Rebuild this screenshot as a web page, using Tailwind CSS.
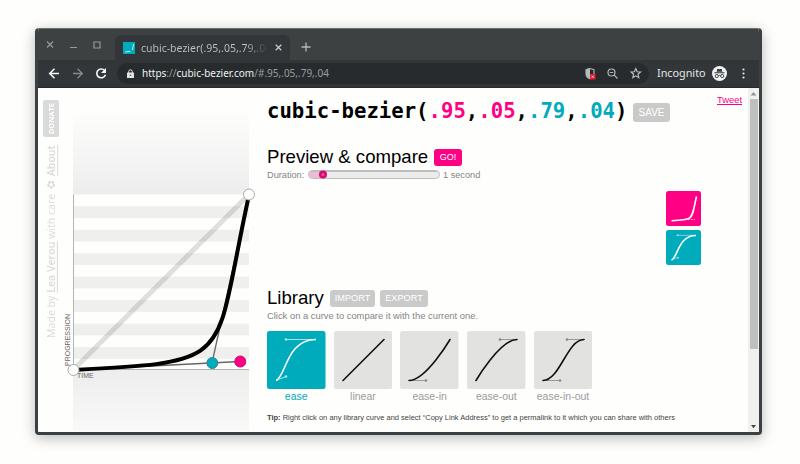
<!DOCTYPE html>
<html lang="en">
<head>
<meta charset="utf-8">
<title>cubic-bezier(.95,.05,.79,.04)</title>
<script src="https://cdn.jsdelivr.net/npm/@tailwindcss/browser@4"></script>
</head>
<body class="h-[464px] w-[800px] overflow-hidden bg-[#fefefd] pt-[28px] pl-[35px] font-['Liberation_Sans',Arial,sans-serif]">
<div class="flex h-[407px] w-[727px] flex-col overflow-hidden rounded-[4px] border-x-[3px] border-t-[1px] border-b-[3px] border-[#3b4042] border-t-[#6b7070] bg-[#fefefd] shadow-[0_3px_14px_rgba(0,0,0,0.28)]">

  <!-- Tab strip -->
  <header class="flex h-[31px] shrink-0 items-end bg-[#3d4141] font-['Noto_Sans','Open_Sans',sans-serif]">
    <svg class="h-[31px] w-[77px] shrink-0" viewBox="0 0 77 31" fill="none" stroke="#969a9a" stroke-width="1.2">
      <path d="M9 12.500l6 6M15 12.500l-6 6M32 18.500h7"/><path d="M56 13h6v6h-6z"/>
    </svg>
    <div class="flex h-[25px] w-[175px] shrink-0 items-center rounded-t-[6px] bg-[#323638] pl-[8px]">
      <svg class="size-[12px] shrink-0" viewBox="0 0 12 12"><path fill="#00abbc" d="M0 0h12v12H0z"/><path d="M2 10L7.500 9.300M9.500 8L10.500 2" fill="none" stroke="#bfeaee" stroke-width="1"/></svg>
      <span class="ml-[6px] w-[127px] shrink-0 overflow-hidden whitespace-nowrap bg-linear-to-r from-[#c0c3c3] from-82% to-[#323638] bg-clip-text text-[10.5px] leading-[16px] text-transparent">cubic-bezier(.95,.05,.79,.04)</span>
      <svg class="ml-[7px] size-[7px] shrink-0" viewBox="0 0 7 7" stroke="#c4c7c7" stroke-width="1.300"><path d="M.7.7l5.600 5.600M6.300.7L.7 6.300"/></svg>
    </div>
    <svg class="mb-[8px] ml-[11px] size-[10px]" viewBox="0 0 10 10" stroke="#b5b8b8" stroke-width="1.300"><path d="M5 .5v9M.5 5h9"/></svg>
  </header>

  <!-- Toolbar -->
  <div class="flex h-[28px] shrink-0 items-center border-b border-[#262a2b] bg-[#323638] font-['Noto_Sans','Open_Sans',sans-serif]">
    <svg class="h-[27px] w-[79px] shrink-0" viewBox="0 0 79 27" fill="none" stroke-width="1.600">
      <path d="M21 13.500h-9M16.500 8.700l-4.800 4.800 4.800 4.800" stroke="#f4f5f5"/>
      <path d="M35 13.500h9M39.500 8.700l4.800 4.800-4.800 4.800" stroke="#868a8a" stroke-width="1.300"/>
      <path d="M66.600 10.600A4.400 4.400 0 1 0 67.400 14.700" stroke="#f4f5f5"/><path d="M68 8v5h-5z" fill="#f4f5f5"/>
    </svg>
    <div class="flex h-[21px] w-[532px] shrink-0 items-center rounded-full bg-[#272b2d] pl-[10px] text-[10px]">
      <svg class="h-[9px] w-[7px] shrink-0" viewBox="0 0 7 9"><rect y="3.500" width="7" height="5.500" rx=".6" fill="#e2e4e4"/><path d="M1.700 4V2.600a1.800 1.800 0 0 1 3.600 0V4" fill="none" stroke="#e2e4e4"/><circle cx="3.500" cy="6.200" r=".8" fill="#555"/></svg>
      <span class="ml-[8px] whitespace-nowrap text-[#999d9f]"><span class="text-[#f0f2f2]">https</span>://<span class="text-[#f0f2f2]">cubic-bezier.com</span>/#.95,.05,.79,.04</span>
      <svg class="mr-[5px] ml-auto h-[21px] w-[59px] shrink-0" viewBox="0 0 59 21" fill="none">
        <path d="M5 5.500l4 1.300v4c0 2.300-1.700 4.200-4 5-2.300-.8-4-2.700-4-5v-4z" stroke="#aaaeae" stroke-width="1.200"/><path d="M5 5.500v10.300c-2.300-.8-4-2.700-4-5v-4z" fill="#b8bbbb"/>
        <rect x="5" y="11" width="5.500" height="5.500" fill="#e3202c"/><path d="M6.700 12.700l2 2M8.700 12.700l-2 2" stroke="#fff" stroke-width=".8"/>
        <circle cx="26.500" cy="9.500" r="3.500" stroke="#b3b6b6" stroke-width="1.200"/><path d="M24.800 9.500h3.400M29.200 12.200l3.300 3.300" stroke="#b3b6b6" stroke-width="1.200"/>
        <path d="M50.800 5.500l1.400 3.200 3.400.3-2.600 2.300.8 3.400-3-1.800-3 1.800.8-3.400L46 9l3.400-.3z" stroke="#c3c6c6" stroke-width="1.100"/>
      </svg>
    </div>
    <span class="ml-[8px] w-[50px] shrink-0 whitespace-nowrap text-[10.800px] text-[#e4e6e6]">Incognito</span>
    <svg class="ml-[5px] size-[15px] shrink-0" viewBox="0 0 15 15"><circle cx="7.500" cy="7.500" r="7.500" fill="#f0f1f1"/><path d="M4.600 5.700l.8-3 2.100.5 2.100-.5.8 3zM2.500 6.300h10v1h-10z" fill="#323638"/><g fill="none" stroke="#323638" stroke-width=".9"><circle cx="4.800" cy="10" r="1.600"/><circle cx="10.200" cy="10" r="1.600"/><path d="M6.400 9.700q1.100-.7 2.200 0"/></g></svg>
    <svg class="ml-[15px] h-[11px] w-[3px] shrink-0" viewBox="0 0 3 11" fill="#e4e6e6"><circle cx="1.500" cy="1.500" r="1.100"/><circle cx="1.500" cy="5.500" r="1.100"/><circle cx="1.500" cy="9.500" r="1.100"/></svg>
  </div>

  <!-- Page -->
  <div class="flex min-h-0 grow">
    <aside class="flex w-[24px] shrink-0 flex-col items-start pt-[12px] pl-[5px] font-['Open_Sans',sans-serif]">
      <div class="flex h-[37px] w-[16px] shrink-0 items-center justify-center rounded-[2px] bg-[#dadada]"><span class="rotate-180 text-[7.5px] leading-[16px] font-bold text-white [writing-mode:vertical-rl]">DONATE</span></div>
      <p class="mt-[4px] flex h-[197px] w-[17px] shrink-0 rotate-180 items-start justify-start whitespace-nowrap text-[10.600px] leading-[17px] text-[#dadada] [writing-mode:vertical-rl]"><span>Made by <b class="font-semibold underline">Lea Verou</b> with care <span class="font-['DejaVu_Sans']">✿</span> <b class="font-semibold underline">About</b></span></p>
    </aside>
    <svg class="h-[343px] w-[205px] shrink-0" viewBox="62 88 205 343">
      <defs>
        <linearGradient id="above" x1="0" y1="0" x2="0" y2="1"><stop offset="0" stop-color="#eee" stop-opacity="0"/><stop offset="1" stop-color="#ededed"/></linearGradient>
        <linearGradient id="below" x1="0" y1="0" x2="0" y2="1"><stop offset="0" stop-color="#ededed"/><stop offset="1" stop-color="#f9f9f9"/></linearGradient>
        <pattern id="stripes" x="73" y="194.500" width="176" height="23.470" patternUnits="userSpaceOnUse"><path fill="#fefefd" d="M0 0h176v11.700H0z"/><path fill="#efefed" d="M0 11.700h176v11.800H0z"/></pattern>
      </defs>
      <path fill="url(#above)" d="M73 108h176v86.500H73z"/>
      <path fill="url(#below)" d="M73 370h176v61H73z"/>
      <path fill="url(#stripes)" d="M73 194.500h176v175.500H73z"/>
      <path d="M73.500 194.500v175h175.500" fill="none" stroke="#b4b4b4"/>
      <path d="M73 370L249 194.500" stroke="#000" stroke-opacity=".12" stroke-width="5"/>
      <path d="M73 370L240 361.500M249 195L212 363" stroke="#666" stroke-width="1.300"/>
      <path d="M73 370C240 361.500 212 363 249 195" fill="none" stroke="#000" stroke-width="4"/>
      <g stroke-width="1"><circle cx="73.500" cy="370" r="5.500" fill="#fff" stroke="#aaa"/><circle cx="249" cy="194.500" r="5.500" fill="#fff" stroke="#aaa"/><circle cx="240.300" cy="361.500" r="5.500" fill="#ff0084" stroke="#d10070"/><circle cx="212.300" cy="363" r="5.500" fill="#00abbc" stroke="#34858e"/></g>
      <g font-family="Liberation Sans" font-size="7" fill="#666"><text x="77" y="378">TIME</text><text transform="translate(70 366) rotate(-90)">PROGRESSION</text></g>
    </svg>

    <main class="flex w-[481px] shrink-0 flex-col">
      <div class="flex h-[44px] shrink-0 items-start">
        <h1 class="mt-[11px] w-[366px] whitespace-nowrap font-['DejaVu_Sans_Mono',monospace] text-[20.650px] leading-[24px] font-bold text-black">cubic-bezier(<span class="text-[#ff0084]">.95</span>,<span class="text-[#ff0084]">.05</span>,<span class="text-[#00abbc]">.79</span>,<span class="text-[#00abbc]">.04</span>)</h1>
        <button class="mt-[15px] h-[19px] w-[37px] rounded-[3px] bg-[#cacaca] text-[10px] text-white">SAVE</button>
        <a class="mt-[6px] mr-[6px] ml-auto text-[9.400px] leading-[12px] text-[#ff0084] underline">Tweet</a>
      </div>
      <div class="mt-[13px] flex h-[24px] shrink-0 items-center">
        <h2 class="w-[167px] whitespace-nowrap text-[18.600px] leading-[24px] text-black">Preview &amp; compare</h2>
        <button class="mt-[1px] h-[17px] w-[28px] rounded-[3px] bg-[#ff0084] text-[9px] text-white">GO!</button>
      </div>
      <div class="flex h-[12px] shrink-0 items-center whitespace-nowrap text-[9.200px] leading-[12px] text-[#858585]">
        <span class="w-[41px]">Duration:</span>
        <svg class="mb-[2px] h-[9px] w-[132px]" viewBox="0 0 132 9"><rect x=".5" y=".5" width="131" height="8" rx="4" fill="#ececec" stroke="#bdbdbd"/><path d="M15 1H4.500a3.500 3.500 0 0 0 0 7H15z" fill="#eabcd5"/><path d="M3 1.300h126" stroke="#bdbdbd" stroke-width="1.400"/><circle cx="15" cy="4.500" r="4" fill="#d60a70"/><circle cx="15" cy="4.500" r="1.500" fill="#ef4d9c"/></svg>
        <span class="ml-[3px]">1 second</span>
      </div>
      <div class="mt-[10px] ml-[399px] flex w-[35px] shrink-0 flex-col gap-[4px]">
        <svg class="size-[35px]" viewBox="0 0 35 35"><rect width="35" height="35" rx="2.500" fill="#ff0084"/><path d="M5.500 29.700C29 28.700 25 28.700 30.500 5.500" fill="none" stroke="#fff" stroke-width="1.600"/><path d="M22 28.500h7" stroke="#fff" stroke-opacity=".6" stroke-dasharray="2 1"/></svg>
        <svg class="size-[35px]" viewBox="0 0 35 35"><rect width="35" height="35" rx="2.500" fill="#00abbc"/><path d="M5.500 30C12 27.500 12 5.500 30 5.500" fill="none" stroke="#fff" stroke-width="1.600"/><path d="M11 5.300h18M6 29.500l6-2" stroke="#fff" stroke-opacity=".6" stroke-width=".8"/><circle cx="11.500" cy="5.300" r="1" fill="#9ddde4"/><circle cx="12" cy="27.700" r="1" fill="#9ddde4"/></svg>
      </div>
      <div class="mt-[21px] flex h-[24px] shrink-0 items-center">
        <h2 class="w-[63px] text-[18.600px] leading-[24px] text-black">Library</h2>
        <button class="mt-[1px] h-[17px] w-[45px] rounded-[3px] bg-[#cacaca] text-[9.200px] text-white">IMPORT</button>
        <button class="mt-[1px] ml-[5px] h-[17px] w-[48px] rounded-[3px] bg-[#cacaca] text-[9.200px] text-white">EXPORT</button>
      </div>
      <p class="h-[21px] shrink-0 whitespace-nowrap text-[9.400px] leading-[12px] text-[#858585]">Click on a curve to compare it with the current one.</p>
      <div class="flex shrink-0 gap-[8.200px] text-center text-[10.500px] leading-[13px] text-[#9b9b9b]">
        <figure class="w-[58.500px]"><svg class="mb-[1px] h-[58px] w-[58.500px]" viewBox="0 0 58.5 58"><rect width="58.500" height="58" rx="2.500" fill="#00abbc"/><path d="M9 49.500C19 46 19 8.500 49 8.500" fill="none" stroke="#fff" stroke-width="1.600"/><path d="M19 8.500h30M9 49.500l10-4" stroke="#fff" stroke-opacity=".65"/><g fill="#b2e6eb"><circle cx="19" cy="8.500" r="1.300"/><circle cx="19" cy="45.500" r="1.300"/></g></svg><figcaption class="text-[#00abbc]">ease</figcaption></figure>
        <figure class="w-[58.500px]"><svg class="mb-[1px] h-[58px] w-[58.500px]" viewBox="0 0 58.5 58"><rect width="58.500" height="58" rx="2.500" fill="#e2e2e1"/><path d="M9 49.500L50 8.500" fill="none" stroke="#111" stroke-width="1.600" stroke-linecap="round"/></svg><figcaption>linear</figcaption></figure>
        <figure class="w-[58.500px]"><svg class="mb-[1px] h-[58px] w-[58.500px]" viewBox="0 0 58.5 58"><rect width="58.500" height="58" rx="2.500" fill="#e2e2e1"/><path d="M9 49.500h17" stroke="#999"/><circle cx="26" cy="49.500" r="1.300" fill="#888"/><path d="M9 49.500C26 49.500 50 8.500 50 8.500" fill="none" stroke="#111" stroke-width="1.600" stroke-linecap="round"/></svg><figcaption>ease-in</figcaption></figure>
        <figure class="w-[58.500px]"><svg class="mb-[1px] h-[58px] w-[58.500px]" viewBox="0 0 58.5 58"><rect width="58.500" height="58" rx="2.500" fill="#e2e2e1"/><path d="M33 8.500h17" stroke="#999"/><circle cx="33" cy="8.500" r="1.300" fill="#888"/><path d="M9 49.500C9 49.500 33 8.500 50 8.500" fill="none" stroke="#111" stroke-width="1.600" stroke-linecap="round"/></svg><figcaption>ease-out</figcaption></figure>
        <figure class="w-[58.500px]"><svg class="mb-[1px] h-[58px] w-[58.500px]" viewBox="0 0 58.5 58"><rect width="58.500" height="58" rx="2.500" fill="#e2e2e1"/><path d="M33 8.500h17M9 49.500h17" stroke="#999"/><circle cx="33" cy="8.500" r="1.300" fill="#888"/><circle cx="26" cy="49.500" r="1.300" fill="#888"/><path d="M9 49.500C26 49.500 33 8.500 50 8.500" fill="none" stroke="#111" stroke-width="1.600" stroke-linecap="round"/></svg><figcaption>ease-in-out</figcaption></figure>
      </div>
      <p class="mt-[10px] whitespace-nowrap text-[7.500px] leading-[10px] text-[#444]"><b>Tip:</b> Right click on any library curve and select “Copy Link Address” to get a permalink to it which you can share with others</p>
    </main>

    <!-- Scrollbar -->
    <div class="flex grow flex-col items-center bg-[#f0f0ef]">
      <svg class="h-[11px] w-[9px] shrink-0" viewBox="0 0 9 11"><path d="M4.500 4L7.500 7.500h-6z" fill="#939393"/></svg>
      <div class="h-[250px] w-[8px] shrink-0 bg-[#bfbfbf]"></div>
      <svg class="mt-auto h-[11px] w-[9px] shrink-0" viewBox="0 0 9 11"><path d="M2 4h5L4.500 7.200z" fill="#444"/></svg>
    </div>
  </div>
</div>
</body>
</html>
